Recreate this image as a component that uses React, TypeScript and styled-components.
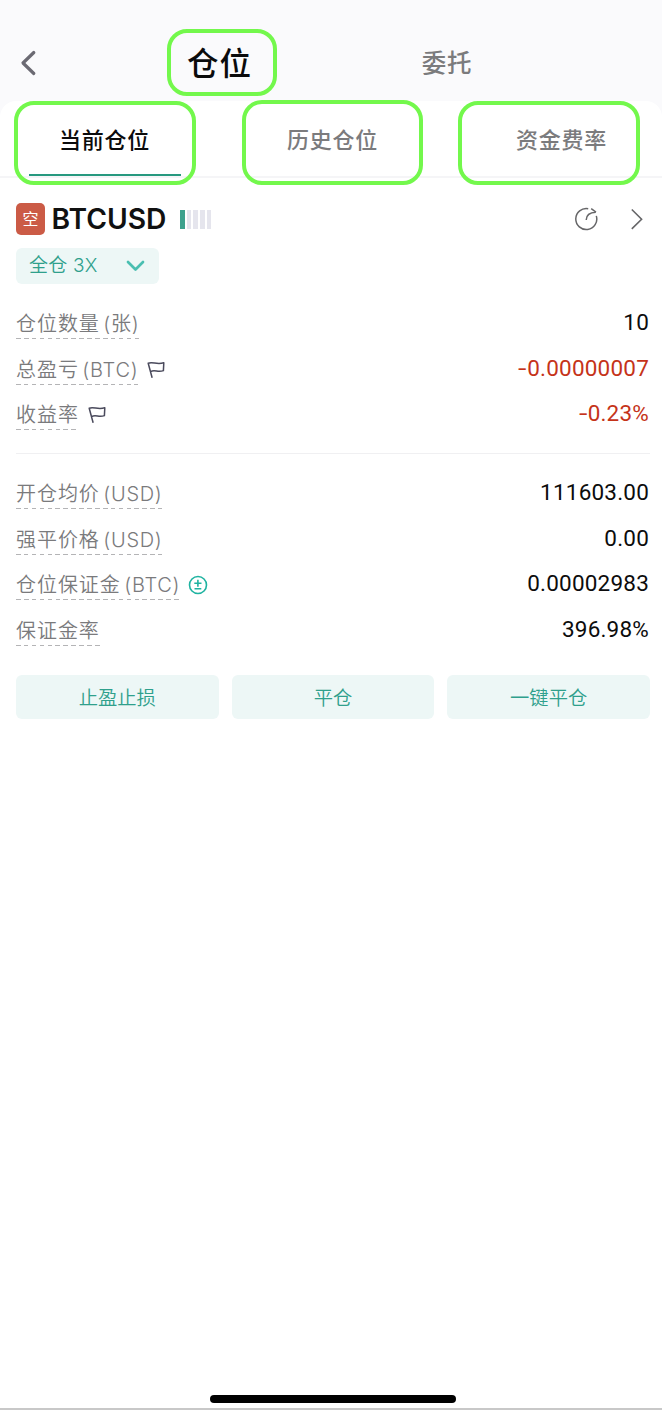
import React from "react";
import styled, { createGlobalStyle } from "styled-components";

const GlobalStyle = createGlobalStyle`
  * { box-sizing: border-box; }
  body { margin: 0; background: #fff; }
  button { border: 0; padding: 0; background: none; font: inherit; color: inherit; }
`;

const cjk = `"Noto Sans CJK SC", sans-serif`;
const cjkLight = `"Noto Sans CJK SC DemiLight", "Noto Sans CJK SC", sans-serif`;

const Screen = styled.div`
  display: flex;
  flex-direction: column;
  height: 1410px;
  background: #fafafc;
  font-family: Inter, ${cjk};
  overflow: hidden;
`;

const Header = styled.header`
  display: grid;
  grid-template-columns: 107px 225px 230px 1fr;
  height: 101px;
  padding-top: 21px;
  align-items: center;
`;

const BackButton = styled.button`
  display: flex;
  padding: 4px 0 0 20px;
`;

const HeaderTab = styled.div<{ $active?: boolean }>`
  position: relative;
  justify-self: center;
  padding-top: ${(p) => (p.$active ? 0 : 2)}px;
  font-family: ${cjk};
  font-weight: 500;
  font-size: ${(p) => (p.$active ? 31.5 : 24.5)}px;
  letter-spacing: ${(p) => (p.$active ? 1 : 0.8)}px;
  line-height: 46px;
  color: ${(p) => (p.$active ? "#0b0b0c" : "#7b7b7d")};
`;

const Highlight = styled.span<{ $top: number; $left: number; $width: number; $height: number }>`
  position: absolute;
  top: ${(p) => p.$top}px;
  left: ${(p) => p.$left}px;
  width: ${(p) => p.$width}px;
  height: ${(p) => p.$height}px;
  border: 4px solid #73f84c;
  border-radius: 20px;
  z-index: 1;
`;

const Panel = styled.main`
  display: flex;
  flex-direction: column;
  flex: 1;
  background: #fff;
  border-radius: 16px 16px 0 0;
`;

const Tabs = styled.nav`
  display: grid;
  grid-template-columns: 208px 248px 206px;
  height: 77px;
  border-bottom: 2px solid #f5f5f7;
`;

const Tab = styled.div<{ $shift?: number }>`
  position: relative;
  height: 77px;
  padding: 21px 0 0 ${(p) => p.$shift ?? 0}px;
  text-align: center;
  font-family: ${cjk};
  font-weight: 500;
  font-size: 22px;
  line-height: 32px;
  letter-spacing: 0.7px;
  color: #7b7b7d;
`;

const ActiveTab = styled(Tab)`
  color: #0b0b0c;
`;

const ActiveBar = styled.div`
  width: 152px;
  height: 2px;
  margin: 20px auto 0;
  background: #27997f;
`;

const Position = styled.section`
  padding: 24px 12px 0 16px;
`;

const TitleRow = styled.div`
  display: flex;
  align-items: center;
  height: 34px;
`;

const SideBadge = styled.span`
  width: 29px;
  height: 32px;
  border-radius: 5px;
  background: #cb5b46;
  color: #fff;
  font-family: ${cjk};
  font-size: 16px;
  line-height: 31px;
  text-align: center;
`;

const Symbol = styled.h1`
  margin: 0 0 1px 6.5px;
  width: 116.5px;
  font-size: 28.2px;
  font-weight: 570;
  line-height: 34px;
  letter-spacing: 0;
  color: #111;
`;

const Meter = styled.div`
  display: flex;
  gap: 2px;
  margin-left: 12px;
`;

const MeterBar = styled.span<{ $on?: boolean }>`
  width: 4.7px;
  height: 19px;
  background: ${(p) => (p.$on ? "#3da18d" : "#e5e5ed")};
`;

const TitleActions = styled.div`
  display: flex;
  align-items: center;
  gap: 29px;
  margin-left: auto;
  padding-right: 5px;
`;

const Leverage = styled.button`
  display: flex;
  align-items: center;
  justify-content: space-between;
  width: 143px;
  height: 36px;
  margin-top: 12px;
  padding: 0 14px 0 13px;
  border-radius: 6px;
  background: #edf7f6;
  color: #2fa08c;
  font-family: Inter, ${cjkLight};
  font-weight: 350;
  font-size: 19px;
  line-height: 32px;
  letter-spacing: 0.2px;
`;

const Rows = styled.dl`
  margin: 16px 0 0;
`;

const Row = styled.div`
  display: flex;
  align-items: center;
  height: 45.7px;
`;

const Label = styled.dt`
  display: flex;
  align-items: center;
`;

const LabelText = styled.span`
  display: block;
  height: 32px;
  font-family: Inter, ${cjkLight};
  font-size: 20px;
  font-weight: 350;
  line-height: 34.5px;
  letter-spacing: 0.95px;
  color: #7a7a7c;
  background: repeating-linear-gradient(90deg, #b4b4b6 0 4.6px, transparent 4.6px 7.9px) left bottom / 100% 1px no-repeat;
`;

const Unit = styled.span`
  margin-left: 3.5px;
  letter-spacing: 0.7px;
`;

const Value = styled.dd<{ $negative?: boolean }>`
  margin: -2px 1px 0 auto;
  font-family: Roboto, sans-serif;
  font-size: 22.5px;
  letter-spacing: 0.2px;
  color: ${(p) => (p.$negative ? "#c53319" : "#0c0c0c")};
`;

const Minus = styled.span`
  display: inline-block;
  margin-right: 1.5px;
  transform: scaleX(1.35);
`;

const Divider = styled.hr`
  height: 1px;
  margin: 16px 0 0;
  border: 0;
  background: #f0f0f2;
`;

const Actions = styled.div`
  display: grid;
  grid-template-columns: repeat(3, 1fr);
  gap: 13px;
  margin-top: 22px;
`;

const Action = styled.button`
  height: 44px;
  border-radius: 6px;
  background: #edf7f6;
  color: #2fa08c;
  font-family: ${cjkLight};
  font-size: 19.3px;
  font-weight: 350;
`;

const HomeArea = styled.footer`
  display: flex;
  align-items: flex-end;
  justify-content: center;
  margin-top: auto;
  height: 20px;
  padding: 0 0 5px 4px;
  border-bottom: 2px solid #c8c8c8;
`;

const HomeIndicator = styled.div`
  width: 246px;
  height: 8px;
  border-radius: 4px;
  background: #000;
`;

const FlagSvg = styled.svg`
  margin: 2px 0 0 9px;
`;

const AdjustSvg = styled.svg`
  margin: 1px 0 0 8px;
`;

const FlagIcon = () => (
  <FlagSvg width="18" height="18" viewBox="0 0 18 18" fill="none" stroke="#4a4a5c" strokeWidth="1.5" strokeLinecap="round" strokeLinejoin="round">
    <path d="M5 16.3 1.2 2.2C6 .2 9.5 4.3 16.8 1.8L16.4 9.6C11 12 8 8.2 3.6 10.6" />
  </FlagSvg>
);

const AdjustIcon = () => (
  <AdjustSvg width="20" height="20" viewBox="0 0 20 20" fill="none" stroke="#1fb3a1" strokeWidth="1.6">
    <circle cx="10" cy="10" r="8.5" />
    <path d="M6.3 8.3h7.2M9.9 4.8v7M6.5 13.8h6.8" />
  </AdjustSvg>
);

const ShareIcon = () => (
  <svg width="24" height="24" viewBox="0 0 24 24" fill="none" stroke="#666668" strokeWidth="1.5">
    <path d="M14.2 1.7A10.5 10.5 0 1 0 22.3 8.9" />
    <path d="M12.2 13C12.3 8.6 15.5 5.4 21.8 5.2M17.2 1.7l4.8 3.4" />
  </svg>
);

interface RowData {
  label: string;
  unit?: string;
  value: string;
  icon?: "flag" | "adjust";
  negative?: boolean;
}

const summary: RowData[] = [
  { label: "仓位数量", unit: "(张)", value: "10" },
  { label: "总盈亏", unit: "(BTC)", value: "0.00000007", icon: "flag", negative: true },
  { label: "收益率", value: "0.23%", icon: "flag", negative: true },
];

const details: RowData[] = [
  { label: "开仓均价", unit: "(USD)", value: "111603.00" },
  { label: "强平价格", unit: "(USD)", value: "0.00" },
  { label: "仓位保证金", unit: "(BTC)", value: "0.00002983", icon: "adjust" },
  { label: "保证金率", value: "396.98%" },
];

const DataRows = ({ rows }: { rows: RowData[] }) => (
  <Rows>
    {rows.map((row) => (
      <Row key={row.label}>
        <Label>
          <LabelText>
            {row.label}
            {row.unit && <Unit>{row.unit}</Unit>}
          </LabelText>
          {row.icon === "flag" && <FlagIcon />}
          {row.icon === "adjust" && <AdjustIcon />}
        </Label>
        <Value $negative={row.negative}>
          {row.negative && <Minus>-</Minus>}
          {row.value}
        </Value>
      </Row>
    ))}
  </Rows>
);

export default function App() {
  return (
    <Screen>
      <GlobalStyle />
      <Header>
        <BackButton aria-label="返回">
          <svg width="17" height="26" viewBox="0 0 17 26" fill="none" stroke="#6b6a73" strokeWidth="3.2" strokeLinecap="round" strokeLinejoin="round">
            <path d="M13.8 2.5 3 13l10.8 10.5" />
          </svg>
        </BackButton>
        <HeaderTab $active>
          仓位
          <Highlight $top={-9} $left={-20} $width={110} $height={67} />
        </HeaderTab>
        <HeaderTab>委托</HeaderTab>
      </Header>
      <Panel>
        <Tabs>
          <ActiveTab $shift={1}>
            当前仓位
            <ActiveBar />
            <Highlight $top={0} $left={14} $width={182} $height={84} />
          </ActiveTab>
          <Tab $shift={1}>
            历史仓位
            <Highlight $top={-1} $left={34} $width={181} $height={85} />
          </Tab>
          <Tab $shift={5}>
            资金费率
            <Highlight $top={0} $left={2} $width={182} $height={84} />
          </Tab>
        </Tabs>
        <Position>
          <TitleRow>
            <SideBadge>空</SideBadge>
            <Symbol>BTCUSD</Symbol>
            <Meter>
              <MeterBar $on />
              <MeterBar />
              <MeterBar />
              <MeterBar />
              <MeterBar />
            </Meter>
            <TitleActions>
              <ShareIcon />
              <svg width="18" height="24" viewBox="0 0 18 24" fill="none" stroke="#666668" strokeWidth="1.6">
                <path d="m4.8 2.5 9.8 9.7-9.8 9.7" />
              </svg>
            </TitleActions>
          </TitleRow>
          <Leverage>
            全仓 3X
            <svg width="19" height="12" viewBox="0 0 19 12" fill="none" stroke="#4abfb1" strokeWidth="2.7" strokeLinecap="round" strokeLinejoin="round">
              <path d="m2 2 7.5 7.5L17 2" />
            </svg>
          </Leverage>
          <DataRows rows={summary} />
          <Divider />
          <DataRows rows={details} />
          <Actions>
            <Action>止盈止损</Action>
            <Action>平仓</Action>
            <Action>一键平仓</Action>
          </Actions>
        </Position>
        <HomeArea>
          <HomeIndicator />
        </HomeArea>
      </Panel>
    </Screen>
  );
}
